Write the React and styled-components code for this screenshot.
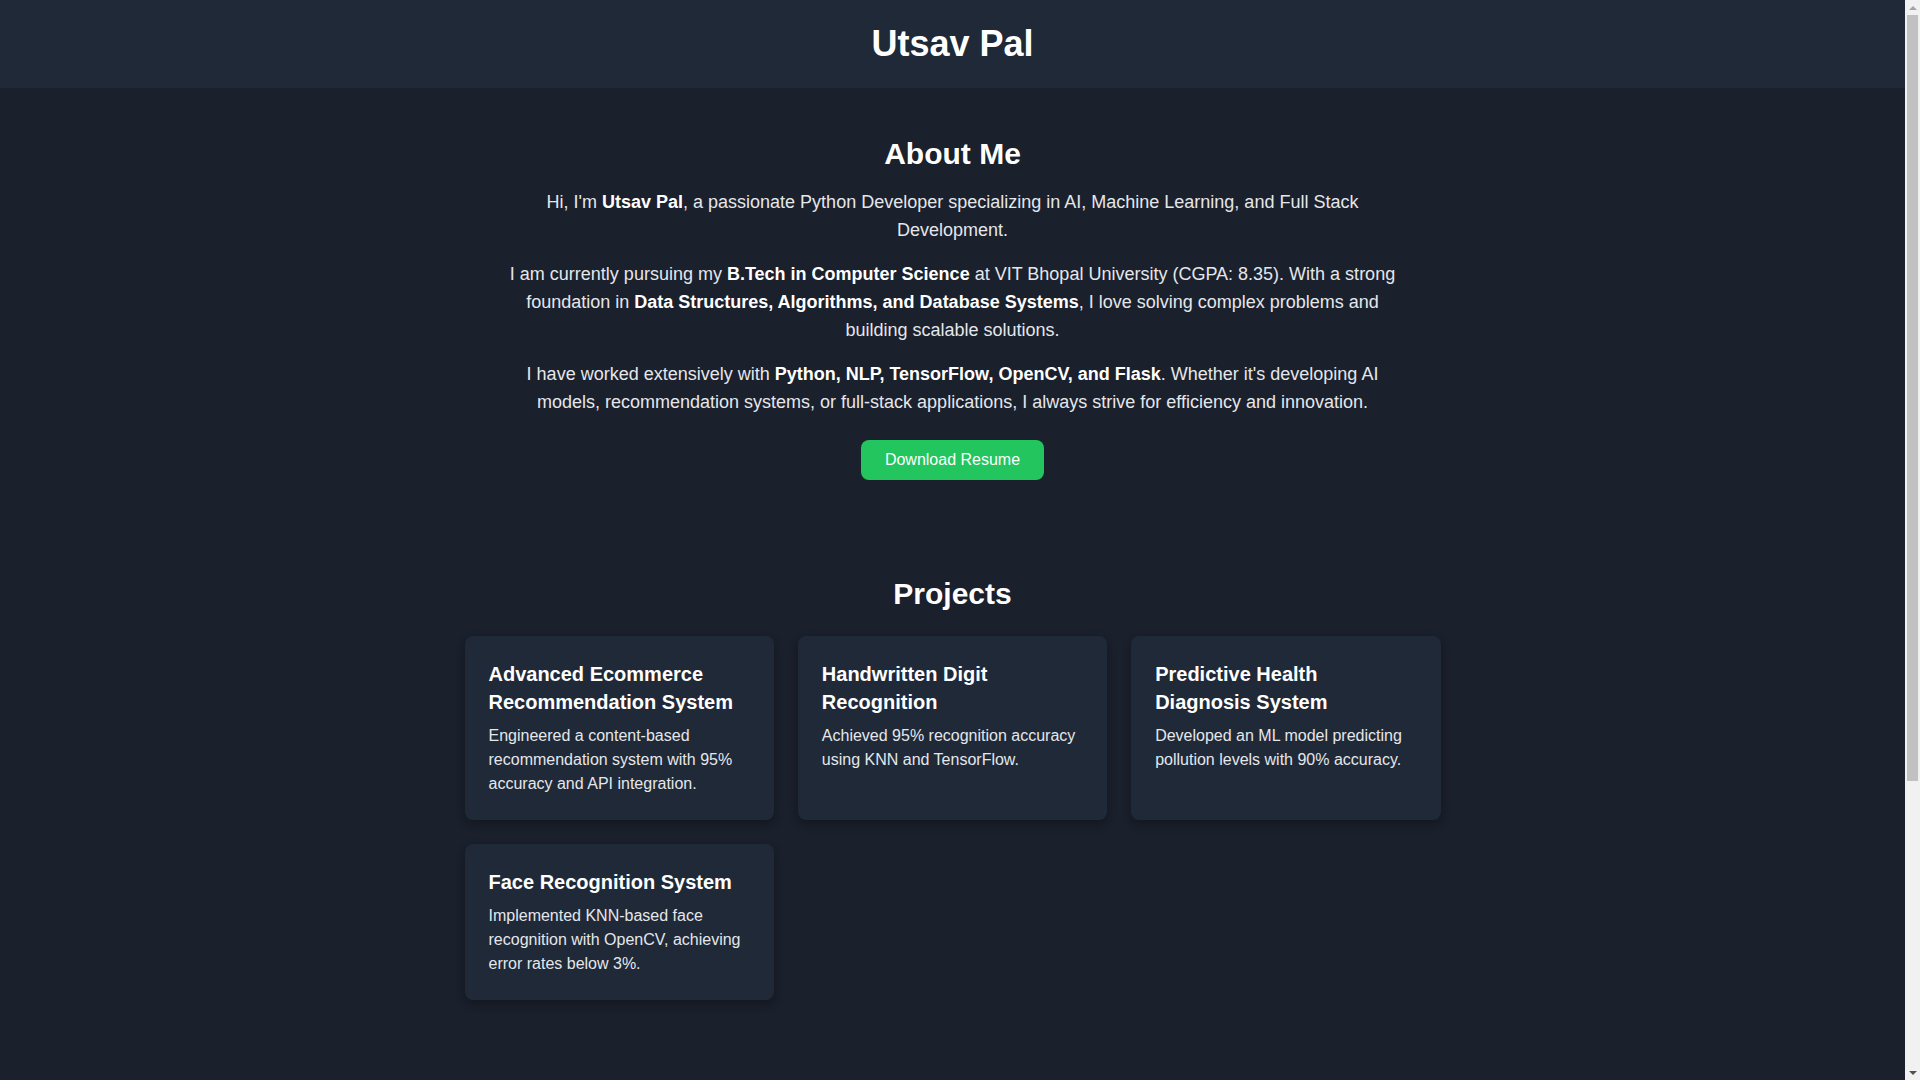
import React from "react";
import styled, { createGlobalStyle } from "styled-components";

const GlobalStyle = createGlobalStyle`
  html, body {
    margin: 0;
    padding: 0;
  }
  body {
    background: #1a202c;
    color: #e5e7eb;
    font-family: "Liberation Sans", Arial, Helvetica, sans-serif;
    margin-right: 15px;
  }
  * { box-sizing: border-box; }
`;

const Scrollbar = styled.div`
  position: fixed;
  top: 0;
  right: 0;
  width: 15px;
  height: 100vh;
  background: #f1f1f1;
  display: flex;
  flex-direction: column;
  align-items: center;
  z-index: 10;
`;

const ScrollArrow = styled.div`
  height: 15px;
  width: 15px;
  flex: none;
  display: flex;
  align-items: center;
  justify-content: center;
  margin-top: ${(p) => (p.$down ? "auto" : "0")};

  &::before {
    content: "";
    width: 0;
    height: 0;
    border-left: 4px solid transparent;
    border-right: 4px solid transparent;
    ${(p) =>
      p.$down
        ? "border-top: 4px solid #505050;"
        : "border-bottom: 4px solid #a3a3a3;"}
  }
`;

const ScrollThumb = styled.div`
  width: 11px;
  height: 766px;
  flex: none;
  background: #c1c1c1;
`;

const Header = styled.header`
  background: #1f2937;
  padding: 24px;
  text-align: center;
`;

const SiteTitle = styled.h1`
  margin: 0;
  font-size: 36px;
  line-height: 40px;
  font-weight: 700;
  color: #ffffff;
`;

const Section = styled.section`
  padding: 48px 16px;
`;

const Narrow = styled.div`
  max-width: ${(p) => p.$width || 900}px;
  margin: 0 auto;
  text-align: center;
`;

const SectionTitle = styled.h2`
  margin: 0 0 ${(p) => p.$gap || 16}px;
  font-size: 30px;
  line-height: 36px;
  font-weight: 700;
  color: #ffffff;
  text-align: center;
`;

const Para = styled.p`
  margin: 0 0 ${(p) => (p.$last ? 0 : 16)}px;
  font-size: 18px;
  line-height: 28px;
  color: #e5e7eb;

  strong {
    color: #ffffff;
    font-weight: 700;
  }
`;

const ButtonRow = styled.div`
  display: flex;
  justify-content: center;
  margin-top: 24px;
`;

const Button = styled.a`
  display: inline-block;
  background: #22c55e;
  color: #ffffff;
  font-size: 16px;
  line-height: 18px;
  padding: 11px 24px;
  border-radius: 8px;
  text-decoration: none;
  cursor: pointer;
`;

const Grid = styled.div`
  width: 976px;
  margin: 0 auto;
  display: grid;
  grid-template-columns: repeat(3, 1fr);
  gap: 24px;
`;

const Card = styled.div`
  background: #1f2937;
  border-radius: 8px;
  padding: 24px;
  box-shadow: 0 4px 10px rgba(0, 0, 0, 0.3);
  text-align: left;
`;

const CardTitle = styled.h3`
  margin: 0 0 8px;
  font-size: 20px;
  line-height: 28px;
  font-weight: 700;
  color: #ffffff;
`;

const CardText = styled.p`
  margin: 0;
  font-size: 16px;
  line-height: 24px;
  color: #e5e7eb;
`;

const Footer = styled.footer`
  background: #1f2937;
  padding: 24px;
  text-align: center;
  font-size: 16px;
  line-height: 24px;
  color: #9ca3af;
`;

const projects = [
  {
    title: "Advanced Ecommerce Recommendation System",
    text: "Engineered a content-based recommendation system with 95% accuracy and API integration.",
  },
  {
    title: "Handwritten Digit Recognition",
    text: "Achieved 95% recognition accuracy using KNN and TensorFlow.",
  },
  {
    title: "Predictive Health Diagnosis System",
    text: "Developed an ML model predicting pollution levels with 90% accuracy.",
  },
  {
    title: "Face Recognition System",
    text: "Implemented KNN-based face recognition with OpenCV, achieving error rates below 3%.",
  },
];

export default function App() {
  return (
    <>
      <GlobalStyle />
      <Scrollbar aria-hidden="true">
        <ScrollArrow />
        <ScrollThumb />
        <ScrollArrow $down />
      </Scrollbar>

      <Header>
        <SiteTitle>Utsav Pal</SiteTitle>
      </Header>

      <Section>
        <Narrow>
          <SectionTitle>About Me</SectionTitle>
          <Para>
            Hi, I'm <strong>Utsav Pal</strong>, a passionate Python Developer
            specializing in AI, Machine Learning, and Full Stack Development.
          </Para>
          <Para>
            I am currently pursuing my <strong>B.Tech in Computer Science</strong>{" "}
            at VIT Bhopal University (CGPA: 8.35). With a strong foundation in{" "}
            <strong>Data Structures, Algorithms, and Database Systems</strong>, I
            love solving complex problems and building scalable solutions.
          </Para>
          <Para $last>
            I have worked extensively with{" "}
            <strong>Python, NLP, TensorFlow, OpenCV, and Flask</strong>. Whether
            it's developing AI models, recommendation systems, or full-stack
            applications, I always strive for efficiency and innovation.
          </Para>
          <ButtonRow>
            <Button>Download Resume</Button>
          </ButtonRow>
        </Narrow>
      </Section>

      <Section>
        <SectionTitle $gap={24}>Projects</SectionTitle>
        <Grid>
          {projects.map((p) => (
            <Card key={p.title}>
              <CardTitle>{p.title}</CardTitle>
              <CardText>{p.text}</CardText>
            </Card>
          ))}
        </Grid>
      </Section>

      <Section>
        <Narrow>
          <SectionTitle>Contact</SectionTitle>
          <Para>Feel free to reach out for collaborations or opportunities.</Para>
          <Para>Email: utsavpal@example.com</Para>
          <Para>LinkedIn: linkedin.com/in/utsavpal</Para>
          <Para $last>GitHub: github.com/utsavpal</Para>
          <ButtonRow>
            <Button>Get in Touch</Button>
          </ButtonRow>
        </Narrow>
      </Section>

      <Footer>© 2025 Utsav Pal. All rights reserved.</Footer>
    </>
  );
}
